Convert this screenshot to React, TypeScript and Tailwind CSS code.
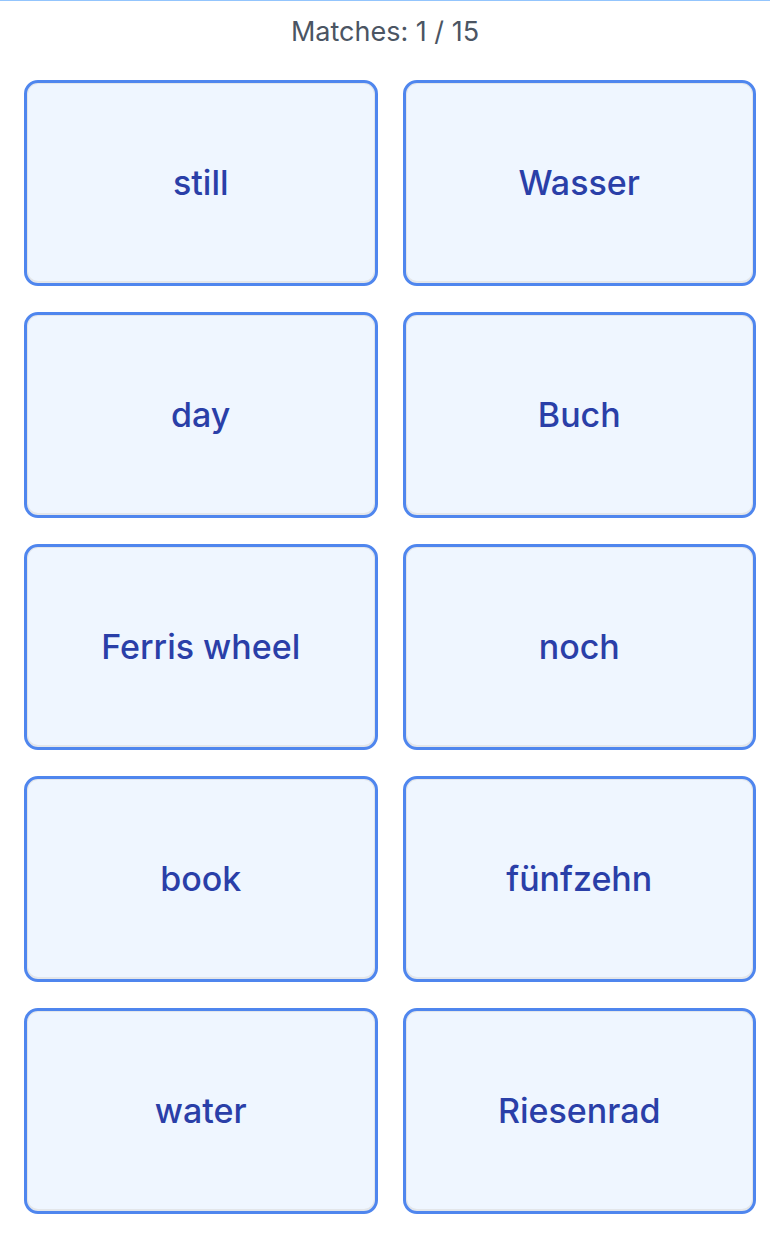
import React from "react";

const words = ["still", "Wasser", "day", "Buch", "Ferris wheel", "noch", "book", "fünfzehn", "water", "Riesenrad"];

const Card = ({ word }: { word: string }) => {
    return (
        <button className="h-[206px] w-full rounded-[14px] border-[3px] border-[#4f86ee] bg-[#eff6ff] shadow-[inset_0_0_0_1px_#e3e6ea,inset_0_-1px_0_1px_#e3e6ea] flex items-center justify-center">
            <span className="text-[34px] font-medium text-[#2a3fa8] -translate-y-[1px]">{word}</span>
        </button>
    );
};

export default function App() {
    return (
        <div className="min-h-[1236px] bg-white border-t border-[#93c5fd]" style={{ fontFamily: "Inter, 'Noto Sans', sans-serif" }}>
            <div className="pt-[15px] pb-[32px] text-center text-[27px] leading-8 text-[#4b5563]">
                Matches: 1 / 15
            </div>
            <div className="pl-6 pr-[14px] grid grid-cols-2 gap-x-[25px] gap-y-[26px]">
                {words.map((w) => (
                    <Card key={w} word={w} />
                ))}
            </div>
        </div>
    );
}
